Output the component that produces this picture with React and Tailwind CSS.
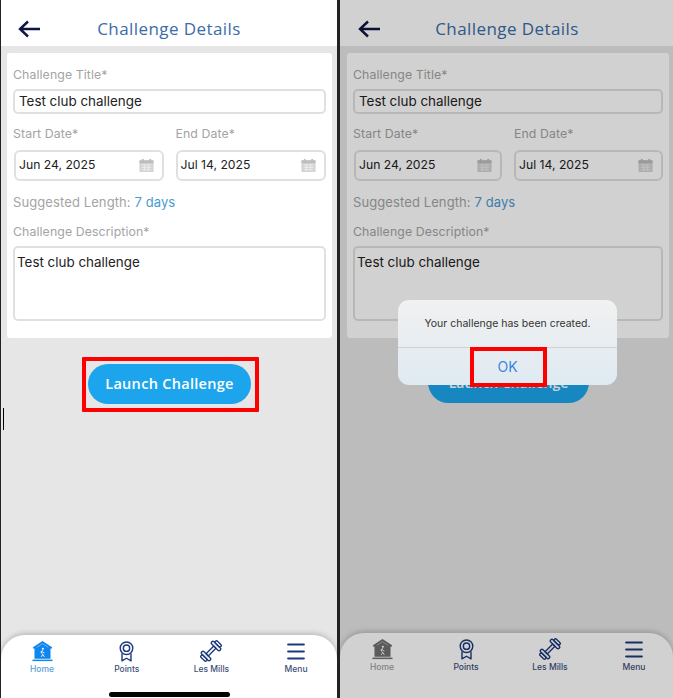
const Cal = () => (
  <svg width="15" height="15" viewBox="0 0 16 15" className="shrink-0">
    <rect x="0.5" y="2" width="15" height="12.5" rx="1" fill="#d4d4d4" />
    <rect x="0.5" y="2" width="15" height="3" fill="#bdbdbd" />
    <rect x="3" y="0.5" width="2" height="3" fill="#bdbdbd" />
    <rect x="11" y="0.5" width="2" height="3" fill="#bdbdbd" />
    <path d="M3 7h10M3 9.5h10M3 12h10M6 6.5v6.5M10 6.5v6.5" stroke="#ededed" strokeWidth="1" />
  </svg>
);

const HomeIcon = ({ color }) => (
  <svg width="21" height="22" viewBox="0 0 22 22">
    <path d="M11 0.5 1 7v1.5h1.6V19h16.8V8.5H21V7z" fill={color} />
    <path d="M5 7.2 11 3.4l6 3.8" stroke="#ffffff" strokeOpacity="0.5" strokeWidth="0.8" fill="none" />
    <rect x="0.5" y="20" width="21" height="1.6" fill={color} />
    <circle cx="11.4" cy="8.6" r="1.1" fill="#fff" />
    <path d="M11 10.2 9.8 13.2l1.4 1.4-1.5 2.6M10.8 12l2.2 1.1M10.4 11l-1.5 1.2M11.3 14.4l1.6 2.8" stroke="#fff" strokeWidth="0.9" fill="none" />
  </svg>
);

const Medal = () => (
  <svg width="15" height="21" viewBox="0 0 16 22" fill="none" stroke="#1e3a7b">
    <circle cx="8" cy="7.5" r="6.7" strokeWidth="1.5" />
    <circle cx="8" cy="7.5" r="3.4" strokeWidth="1.5" />
    <path d="M3.2 13v8l4.8-2.8 4.8 2.8v-8" strokeWidth="1.5" strokeLinejoin="round" />
  </svg>
);

const Dumbbell = () => (
  <svg width="22" height="22" viewBox="-2 -2 26 26" fill="none" stroke="#1e3a7b" strokeWidth="1.6" strokeLinejoin="round">
    <g transform="rotate(-45 11 11)">
      <rect x="-2.6" y="6.6" width="3.4" height="8.8" rx="1.6" />
      <rect x="0.8" y="4" width="3.8" height="14" rx="1.8" />
      <rect x="17.4" y="4" width="3.8" height="14" rx="1.8" />
      <rect x="21.2" y="6.6" width="3.4" height="8.8" rx="1.6" />
      <rect x="4.6" y="9.2" width="12.8" height="3.6" />
    </g>
  </svg>
);

const MenuIcon = () => (
  <svg width="18" height="17" viewBox="0 0 18 17" stroke="#1e3a7b" strokeWidth="2.2" strokeLinecap="round">
    <path d="M1.2 1.5h15.6M1.2 8.5h15.6M1.2 15.5h15.6" />
  </svg>
);

const Field = ({ className, children }) => (
  <div className={`flex items-center border-2 border-[#e0e0e0] bg-white text-[#222] ${className}`}>{children}</div>
);

const Label = ({ children }) => <div className="text-[12.3px] leading-[18px] tracking-[0.1px] text-[#a4a4a4]">{children}</div>;

const Tab = ({ icon, label, color, width }) => (
  <div className={`flex shrink-0 flex-col items-center ${width}`}>
    <div className="flex h-[22px] items-center justify-center">{icon}</div>
    <div className={`mt-[2px] text-[8.5px] font-medium leading-[11px] ${color}`}>{label}</div>
  </div>
);

function Screen({ dim, children, button }) {
  const w = dim ? "w-[84px]" : "w-[84.7px]";
  return (
    <div className="relative flex h-[698px] flex-1 flex-col overflow-hidden bg-[#e6e6e6]">
      <div className={`flex h-[46px] shrink-0 items-center bg-white pt-[12px] ${dim ? "pl-[18px]" : "pl-[17px]"}`}>
        <svg width="23" height="18" viewBox="0 0 23 18" fill="none" stroke="#0e1540" strokeWidth="2.4">
          <path d="M22 9H2M10 1.5 2 9l8 7.5" />
        </svg>
        <div className="flex-1 pr-[40px] text-center font-['Open_Sans',sans-serif] text-[17px] tracking-[0.42px] text-[#3a6ca8]">Challenge Details</div>
      </div>
      <div className={`mt-[7px] flex h-[285px] flex-col rounded-[3px] bg-white pl-[6px] ${dim ? "ml-[7px] mr-[4px] pr-[6px]" : "ml-[6px] mr-[5px] pr-[6px]"} pt-[13px]`}>
        <Label>Challenge Title*</Label>
        <Field className="mt-[5px] h-[25px] rounded-[5px] pl-[4px] text-[13.4px]">Test club challenge</Field>
        <div className="mt-[11px] flex gap-[12px]">
          <div className="flex-1">
            <Label>Start Date*</Label>
            <Field className="ml-[1px] mt-[7px] h-[31px] justify-between rounded-[6px] pl-[3px] pr-[8px] text-[12.2px]">Jun 24, 2025<Cal /></Field>
          </div>
          <div className="flex-1">
            <Label>End Date*</Label>
            <Field className="mt-[7px] h-[31px] justify-between rounded-[6px] pl-[3px] pr-[8px] text-[12.2px]">Jul 14, 2025<Cal /></Field>
          </div>
        </div>
        <div className="mt-[12px] text-[13px] leading-[18px] tracking-[0.1px] text-[#a4a4a4]">
          Suggested Length: <span className="text-[#4a9ad0]">7 days</span>
        </div>
        <div className="mt-[12px]"><Label>Challenge Description*</Label></div>
        <Field className="mt-[5px] h-[75px] !items-start rounded-[5px] pl-[2px] pt-[4px] text-[13.4px]">Test club challenge</Field>
      </div>
      <div className="flex flex-1 flex-col items-center pt-[19px]">{button}</div>
      <div className={`flex shrink-0 rounded-t-[24px] bg-white shadow-[0_-2px_5px_rgba(0,0,0,0.18)] ${dim ? "h-[65px] pl-0 pt-[5px]" : "h-[63px] pt-[5px]"}`}>
        <div className={`flex ${dim ? "" : "-ml-[1.3px]"}`}>
          <Tab width={w} icon={<HomeIcon color={dim ? "#6f6f6f" : "#0f86ee"} />} label="Home" color={dim ? "text-[#a0a0a0]" : "text-[#5a9fdc]"} />
          <Tab width={w} icon={<Medal />} label="Points" color="text-[#3d4f7a]" />
          <Tab width={w} icon={<Dumbbell />} label="Les Mills" color="text-[#3d4f7a]" />
          <Tab width={w} icon={<MenuIcon />} label="Menu" color="text-[#3d4f7a]" />
        </div>
      </div>
      {!dim && <div className="absolute bottom-[1px] left-[108px] h-[5px] w-[121px] rounded-full bg-black" />}
      {children}
    </div>
  );
}

export default function App() {
  return (
    <div className="flex h-[698px] w-[673px] overflow-hidden bg-[#222] font-['Inter',sans-serif]">
      <div className="ml-[1px] flex w-[336px] shrink-0">
        <Screen
          button={
            <div className="ml-[3px] rounded-[1px] border-[4px] border-[#ff0000] pb-[4px] pl-[2px] pr-[4px] pt-[3px]">
              <div className="flex h-[40px] w-[163px] items-center justify-center rounded-full bg-[#1ca5ec] font-['Open_Sans',sans-serif] text-[14.5px] font-semibold tracking-[0.3px] text-white">Launch Challenge</div>
            </div>
          }
        >
          <div className="absolute left-[2px] top-[408px] h-[22px] w-[1px] bg-black" />
        </Screen>
      </div>
      <div className="ml-[3px] flex w-[333px] shrink-0">
        <Screen
          dim
          button={
            <div className="ml-[4px] mt-[5px] flex h-[41px] w-[161px] items-center justify-center rounded-full bg-[#1ca5ec] font-['Open_Sans',sans-serif] text-[14px] font-semibold text-white">Launch Challenge</div>
          }
        >
          <div className="absolute inset-0 bg-black/[0.18]" />
          <div className="absolute left-[58px] top-[300px] flex h-[85px] w-[219px] flex-col rounded-[11px] bg-gradient-to-b from-[#f1f1f1] to-[#dfeaf2]">
            <div className="flex h-[48px] items-center justify-center border-b border-[#cfd3d6] text-[10.5px] text-[#333]">Your challenge has been created.</div>
            <div className="flex flex-1 items-center justify-center text-[14px] text-[#3b86e0]">OK</div>
          </div>
          <div className="absolute left-[130px] top-[347px] h-[40px] w-[77px] border-[4px] border-[#ff0000]" />
        </Screen>
      </div>
    </div>
  );
}
